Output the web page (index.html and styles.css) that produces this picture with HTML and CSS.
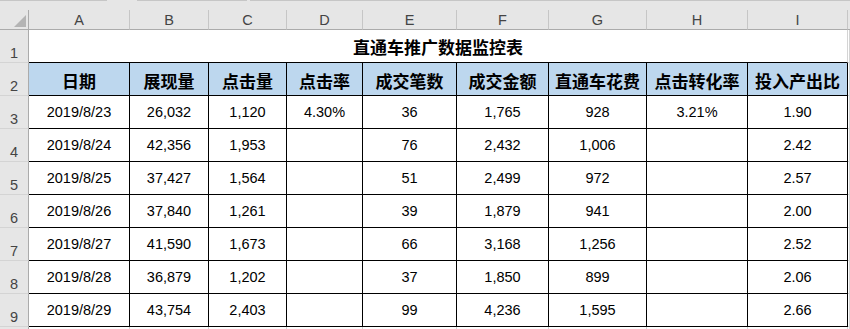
FILE: index.html
```html
<!DOCTYPE html>
<html lang="zh-CN">
<head>
<meta charset="utf-8">
<title>直通车推广数据监控表</title>
<link rel="stylesheet" href="styles.css">
</head>
<body>
<div class="sheet">
  <div class="topbar">
    <span class="seg seg1"></span>
    <span class="seg seg2"></span>
    <span class="seg seg3"></span>
  </div>
  <div class="grid">
    <div class="ch corner"><span class="tri"></span></div>
    <div class="ch">A</div><div class="ch">B</div><div class="ch">C</div><div class="ch">D</div><div class="ch">E</div><div class="ch">F</div><div class="ch">G</div><div class="ch">H</div><div class="ch">I</div><div class="ch last"></div>

    <div class="rh">1</div>
    <div class="title">直通车推广数据监控表</div>
    <div class="gl"></div>

    <div class="rh">2</div>
    <div class="c hd">日期</div><div class="c hd">展现量</div><div class="c hd">点击量</div><div class="c hd">点击率</div><div class="c hd">成交笔数</div><div class="c hd">成交金额</div><div class="c hd">直通车花费</div><div class="c hd">点击转化率</div><div class="c hd">投入产出比</div>
    <div class="gl"></div>

    <div class="rh">3</div>
    <div class="c">2019/8/23</div><div class="c">26,032</div><div class="c">1,120</div><div class="c">4.30%</div><div class="c">36</div><div class="c">1,765</div><div class="c">928</div><div class="c">3.21%</div><div class="c">1.90</div>
    <div class="gl"></div>

    <div class="rh">4</div>
    <div class="c">2019/8/24</div><div class="c">42,356</div><div class="c">1,953</div><div class="c"></div><div class="c">76</div><div class="c">2,432</div><div class="c">1,006</div><div class="c"></div><div class="c">2.42</div>
    <div class="gl"></div>

    <div class="rh">5</div>
    <div class="c">2019/8/25</div><div class="c">37,427</div><div class="c">1,564</div><div class="c"></div><div class="c">51</div><div class="c">2,499</div><div class="c">972</div><div class="c"></div><div class="c">2.57</div>
    <div class="gl"></div>

    <div class="rh">6</div>
    <div class="c">2019/8/26</div><div class="c">37,840</div><div class="c">1,261</div><div class="c"></div><div class="c">39</div><div class="c">1,879</div><div class="c">941</div><div class="c"></div><div class="c">2.00</div>
    <div class="gl"></div>

    <div class="rh">7</div>
    <div class="c">2019/8/27</div><div class="c">41,590</div><div class="c">1,673</div><div class="c"></div><div class="c">66</div><div class="c">3,168</div><div class="c">1,256</div><div class="c"></div><div class="c">2.52</div>
    <div class="gl"></div>

    <div class="rh">8</div>
    <div class="c">2019/8/28</div><div class="c">36,879</div><div class="c">1,202</div><div class="c"></div><div class="c">37</div><div class="c">1,850</div><div class="c">899</div><div class="c"></div><div class="c">2.06</div>
    <div class="gl"></div>

    <div class="rh">9</div>
    <div class="c">2019/8/29</div><div class="c">43,754</div><div class="c">2,403</div><div class="c"></div><div class="c">99</div><div class="c">4,236</div><div class="c">1,595</div><div class="c"></div><div class="c">2.66</div>
    <div class="gl"></div>

    <div class="rh"></div>
    <div class="gl"></div><div class="gl"></div><div class="gl"></div><div class="gl"></div><div class="gl"></div><div class="gl"></div><div class="gl"></div><div class="gl"></div><div class="gl"></div><div class="gl"></div>
  </div>
</div>
</body>
</html>
```

FILE: styles.css
```css
html, body {
  margin: 0;
  padding: 0;
  background: #ffffff;
}

.sheet {
  width: 850px;
  height: 329px;
  overflow: hidden;
  font-family: "Liberation Sans", Arial, sans-serif;
}

.topbar {
  height: 10px;
  background: #e6e6e6;
  display: flex;
  align-items: flex-start;
}

.seg {
  height: 1px;
  background: #c6c6c6;
}

.seg1 { width: 107px; }
.seg2 { width: 110px; margin-left: 30px; }
.seg3 { flex: 1; margin-left: 3px; }

.grid {
  display: grid;
  grid-template-columns: 29px 101px 79px 78px 76px 94px 92px 98px 101px 100px 1fr;
  grid-template-rows: 20px repeat(10, 33px);
}

.grid > div {
  box-sizing: border-box;
  min-width: 0;
}

.ch {
  background: #e6e6e6;
  border-right: 1px solid #c6c6c6;
  border-bottom: 1px solid #ababab;
  display: flex;
  align-items: center;
  justify-content: center;
  color: #444444;
  font-size: 14.5px;
  padding-top: 1px;
}

.ch.last {
  border-right: none;
}

.corner {
  position: relative;
  border-right: 1px solid #ababab;
}

.tri {
  position: absolute;
  right: 2px;
  bottom: 2px;
  width: 12px;
  height: 12px;
  background: #b4b4b4;
  clip-path: polygon(100% 0, 100% 100%, 0 100%);
}

.rh {
  background: #e6e6e6;
  border-right: 1px solid #ababab;
  border-bottom: 1px solid #d4d4d4;
  display: flex;
  align-items: flex-end;
  justify-content: center;
  color: #444444;
  font-size: 14.5px;
  line-height: 16px;
  padding-bottom: 1px;
}

.title {
  grid-column: span 9;
  border-right: 1px solid #d4d4d4;
  border-bottom: 1px solid #000000;
  display: flex;
  align-items: center;
  justify-content: center;
  font-family: "Noto Sans CJK SC", "Liberation Sans", sans-serif;
  font-weight: bold;
  font-size: 17px;
  color: #000000;
}

.gl {
  border-bottom: 1px solid #d4d4d4;
  border-right: 1px solid #d4d4d4;
}

.c {
  border-right: 1px solid #000000;
  border-bottom: 1px solid #000000;
  display: flex;
  align-items: center;
  justify-content: center;
  font-size: 14.5px;
  color: #000000;
  white-space: nowrap;
}

.hd {
  background: #bdd7ee;
  font-family: "Noto Sans CJK SC", "Liberation Sans", sans-serif;
  font-weight: bold;
  font-size: 17px;
  padding-top: 2px;
}
```
